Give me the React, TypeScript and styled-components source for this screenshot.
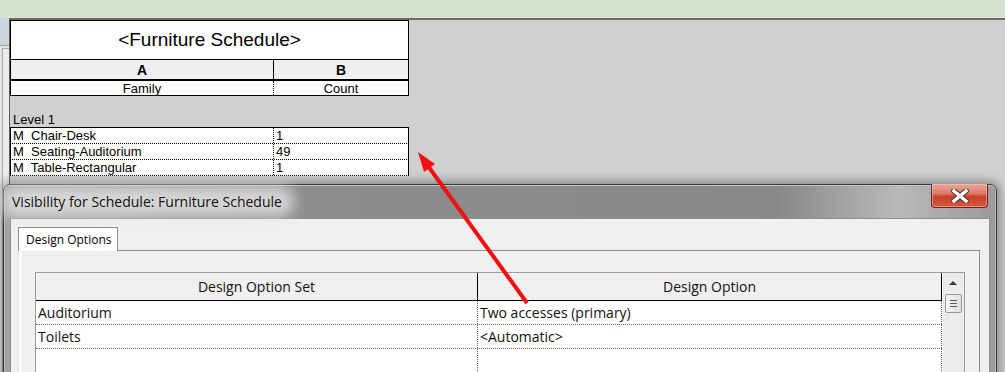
import React from 'react';
import styled, { createGlobalStyle } from 'styled-components';

const GlobalStyle = createGlobalStyle`
  *, *::before, *::after { box-sizing: border-box; }
  body {
    margin: 0;
    overflow: hidden;
    font-family: "Liberation Sans", Arial, sans-serif;
  }
`;

const Screen = styled.div`
  position: relative;
  width: 1005px;
  height: 372px;
  overflow: hidden;
  background: #d0d0d0;
`;

const TopBar = styled.div`
  height: 18px;
  background: #d8e2d2;
`;

const Workspace = styled.div`
  display: flex;
  height: 354px;
`;

const LeftStrip = styled.div`
  width: 10px;
  display: flex;
  flex-direction: column;
  background: #e4e4e4;
  border-right: 1px solid #5a5a5a;
`;

const StripHeader = styled.div`
  height: 28px;
  background: #c9d6e2;
  border-bottom: 1px solid #9aa3ab;
`;

const StripPanel = styled.div`
  flex: 1;
  margin: 2px 0 0 2px;
  border-left: 1px solid #a8a8a8;
  border-top: 1px solid #a8a8a8;
  background: #ebebeb;
`;

const ViewArea = styled.div`
  flex: 1;
  border-top: 2px solid #6b6b6b;
`;

/* schedule */

const Schedule = styled.div`
  width: 399px;
  color: #000;
  font-size: 13px;
`;

const SchedTitle = styled.div`
  height: 40px;
  border: 1px solid #000;
  background: #fff;
  display: flex;
  align-items: center;
  justify-content: center;
  font-size: 19px;
`;

const SchedRow = styled.div<{ $h: number; $bg?: string; $bottom?: string; $split?: string }>`
  display: grid;
  grid-template-columns: 263px 134px;
  height: ${(p) => p.$h}px;
  background: ${(p) => p.$bg || '#fff'};
  border-left: 1px solid #000;
  border-right: 1px solid #000;
  border-bottom: ${(p) => p.$bottom || '1px solid #000'};
  > div:first-child {
    border-right: 1px ${(p) => p.$split || 'solid'} #000;
  }
`;

const HeadCell = styled.div<{ $bold?: boolean }>`
  display: flex;
  align-items: center;
  justify-content: center;
  font-weight: ${(p) => (p.$bold ? 700 : 400)};
  font-size: ${(p) => (p.$bold ? 14 : 13)}px;
  line-height: 1;
  overflow: hidden;
`;

const DataCell = styled.div`
  padding-left: 2px;
  line-height: 15px;
  white-space: pre;
  overflow: hidden;
`;

const LevelLabel = styled.div`
  margin-top: 17px;
  height: 14px;
  line-height: 14px;
  padding-left: 3px;
`;

const DataBox = styled.div`
  width: 399px;
  border-top: 1px solid #000;
`;

/* dialog */

const Dialog = styled.div`
  position: absolute;
  left: 3px;
  top: 184px;
  width: 994px;
  height: 210px;
  display: flex;
  flex-direction: column;
  padding: 0 6px;
  border: 1px solid #3a3a3a;
  border-radius: 7px 7px 0 0;
  background: linear-gradient(
    to right,
    #a3a3a3 0%,
    #8d8d8d 30%,
    #888888 78%,
    #b9b9b9 90%,
    #9a9a9a 100%
  );
  box-shadow: 0 0 10px 3px rgba(0, 0, 0, 0.35), inset 0 1px 0 #c8c8c8, inset 1px 0 0 #bcbcbc,
    inset -1px 0 0 #bcbcbc;
`;

const TitleBar = styled.div`
  flex-shrink: 0;
  height: 33px;
  display: flex;
  justify-content: space-between;
  align-items: center;
`;

const TitleText = styled.div`
  position: relative;
  z-index: 0;
  padding-left: 2px;
  font-family: "Open Sans", "Noto Sans", sans-serif;
  font-size: 14px;
  color: #111;
  &::before {
    content: '';
    position: absolute;
    left: -8px;
    right: -12px;
    top: -6px;
    bottom: -6px;
    background: rgba(225, 225, 225, 0.85);
    border-radius: 14px;
    filter: blur(7px);
    z-index: -1;
  }
`;

const CloseButton = styled.div`
  align-self: flex-start;
  margin-top: -1px;
  margin-right: 2px;
  width: 57px;
  height: 24px;
  display: flex;
  align-items: center;
  justify-content: center;
  border: 1px solid #6e2418;
  border-top: none;
  border-radius: 0 0 4px 4px;
  background: linear-gradient(#eaa595 0%, #dc7a64 42%, #c8402a 55%, #cf5a3e 100%);
  box-shadow: inset 0 0 0 1px rgba(255, 200, 190, 0.5);
`;

const Content = styled.div`
  flex: 1;
  min-height: 0;
  overflow: hidden;
  border: 1px solid #8f8f8f;
  background: #f0f0f0;
  padding: 8px 0 0 7px;
`;

const Tab = styled.div`
  position: relative;
  z-index: 1;
  width: 100px;
  height: 24px;
  margin-bottom: -1px;
  padding: 3px 0 0 7px;
  border: 1px solid #8c8e94;
  border-bottom: none;
  background: #fff;
  font-family: "Open Sans", "Noto Sans", sans-serif;
  font-size: 12px;
  color: #000;
`;

const TabPanel = styled.div`
  width: 962px;
  height: 200px;
  padding: 21px 0 0 16px;
  border: 1px solid #8c8e94;
  border-left-color: #e8e8e8;
  background: #f0f0f0;
  box-shadow: inset 3px 0 0 #fbfbfb;
`;

const Grid = styled.div`
  width: 930px;
  height: 120px;
  display: flex;
  border: 1px solid #9c9c9c;
  border-bottom: none;
  background: #fff;
  font-family: "Open Sans", "Noto Sans", sans-serif;
  font-size: 14px;
  color: #111;
`;

const GridBody = styled.div`
  flex: 1;
`;

const GridRow = styled.div<{ $head?: boolean }>`
  display: grid;
  grid-template-columns: 442px 464px;
  height: ${(p) => (p.$head ? 28 : 24)}px;
  background: ${(p) => (p.$head ? '#f0f0f0' : '#fff')};
  border-bottom: 1px ${(p) => (p.$head ? 'solid #000' : 'dotted #6a6a6a')};
  > div {
    border-right: 1px ${(p) => (p.$head ? 'solid #000' : 'dotted #6a6a6a')};
  }
`;

const GridCell = styled.div<{ $center?: boolean }>`
  display: flex;
  align-items: center;
  justify-content: ${(p) => (p.$center ? 'center' : 'flex-start')};
  padding-left: ${(p) => (p.$center ? 0 : 2)}px;
  white-space: nowrap;
  overflow: hidden;
`;

const ScrollBar = styled.div`
  width: 22px;
  background: #ebebeb;
  box-shadow: inset 1px 0 0 #f7f7f7;
  display: flex;
  flex-direction: column;
  align-items: center;
  padding-top: 8px;
`;

const ArrowUp = styled.div`
  width: 0;
  height: 0;
  border-left: 4px solid transparent;
  border-right: 4px solid transparent;
  border-bottom: 4px solid #3a3a3a;
`;

const Thumb = styled.div`
  margin-top: 9px;
  margin-left: 1px;
  width: 17px;
  height: 19px;
  border: 1px solid #9a9a9a;
  border-radius: 2px;
  background: linear-gradient(to right, #f6f6f6, #dedede);
  display: flex;
  flex-direction: column;
  justify-content: center;
  gap: 2px;
  padding: 0 4px;
  span {
    height: 1px;
    background: #5a5a5a;
  }
`;

const Overlay = styled.svg`
  position: absolute;
  left: 0;
  top: 0;
  pointer-events: none;
`;

const rows = [
  { family: 'M  Chair-Desk', count: '1' },
  { family: 'M  Seating-Auditorium', count: '49' },
  { family: 'M  Table-Rectangular', count: '1' },
];

const options = [
  { set: 'Auditorium', option: 'Two accesses (primary)' },
  { set: 'Toilets', option: '<Automatic>' },
  { set: '', option: '' },
];

export default function App() {
  return (
    <>
      <GlobalStyle />
      <Screen>
        <TopBar />
        <Workspace>
          <LeftStrip>
            <StripHeader />
            <StripPanel />
          </LeftStrip>
          <ViewArea>
            <Schedule>
              <SchedTitle>&lt;Furniture Schedule&gt;</SchedTitle>
              <SchedRow $h={21} $bg="#efefef" $bottom="2px solid #000">
                <HeadCell $bold>A</HeadCell>
                <HeadCell $bold>B</HeadCell>
              </SchedRow>
              <SchedRow $h={15} $split="dotted">
                <HeadCell>Family</HeadCell>
                <HeadCell>Count</HeadCell>
              </SchedRow>
              <LevelLabel>Level 1</LevelLabel>
              <DataBox>
                {rows.map((r) => (
                  <SchedRow key={r.family} $h={16} $split="dotted" $bottom="1px dotted #000">
                    <DataCell>{r.family}</DataCell>
                    <DataCell>{r.count}</DataCell>
                  </SchedRow>
                ))}
              </DataBox>
            </Schedule>
          </ViewArea>
        </Workspace>

        <Dialog>
          <TitleBar>
            <TitleText>Visibility for Schedule: Furniture Schedule</TitleText>
            <CloseButton>
              <svg width="18" height="14" viewBox="0 0 18 14">
                <path d="M3 2 L15 12 M15 2 L3 12" stroke="#4a2a24" strokeWidth="5.5" strokeLinecap="square" />
                <path d="M3 2 L15 12 M15 2 L3 12" stroke="#fff" strokeWidth="3.5" strokeLinecap="square" />
              </svg>
            </CloseButton>
          </TitleBar>
          <Content>
            <Tab>Design Options</Tab>
            <TabPanel>
              <Grid>
                <GridBody>
                  <GridRow $head>
                    <GridCell $center>Design Option Set</GridCell>
                    <GridCell $center>Design Option</GridCell>
                  </GridRow>
                  {options.map((o, i) => (
                    <GridRow key={i}>
                      <GridCell>{o.set}</GridCell>
                      <GridCell>{o.option}</GridCell>
                    </GridRow>
                  ))}
                </GridBody>
                <ScrollBar>
                  <ArrowUp />
                  <Thumb>
                    <span />
                    <span />
                    <span />
                  </Thumb>
                </ScrollBar>
              </Grid>
            </TabPanel>
          </Content>
        </Dialog>

        <Overlay width="1005" height="372" viewBox="0 0 1005 372">
          <line x1="527" y1="303" x2="428" y2="166" stroke="#f01010" strokeWidth="4" />
          <polygon points="418,152 435,164 424,172" fill="#f01010" />
        </Overlay>
      </Screen>
    </>
  );
}
